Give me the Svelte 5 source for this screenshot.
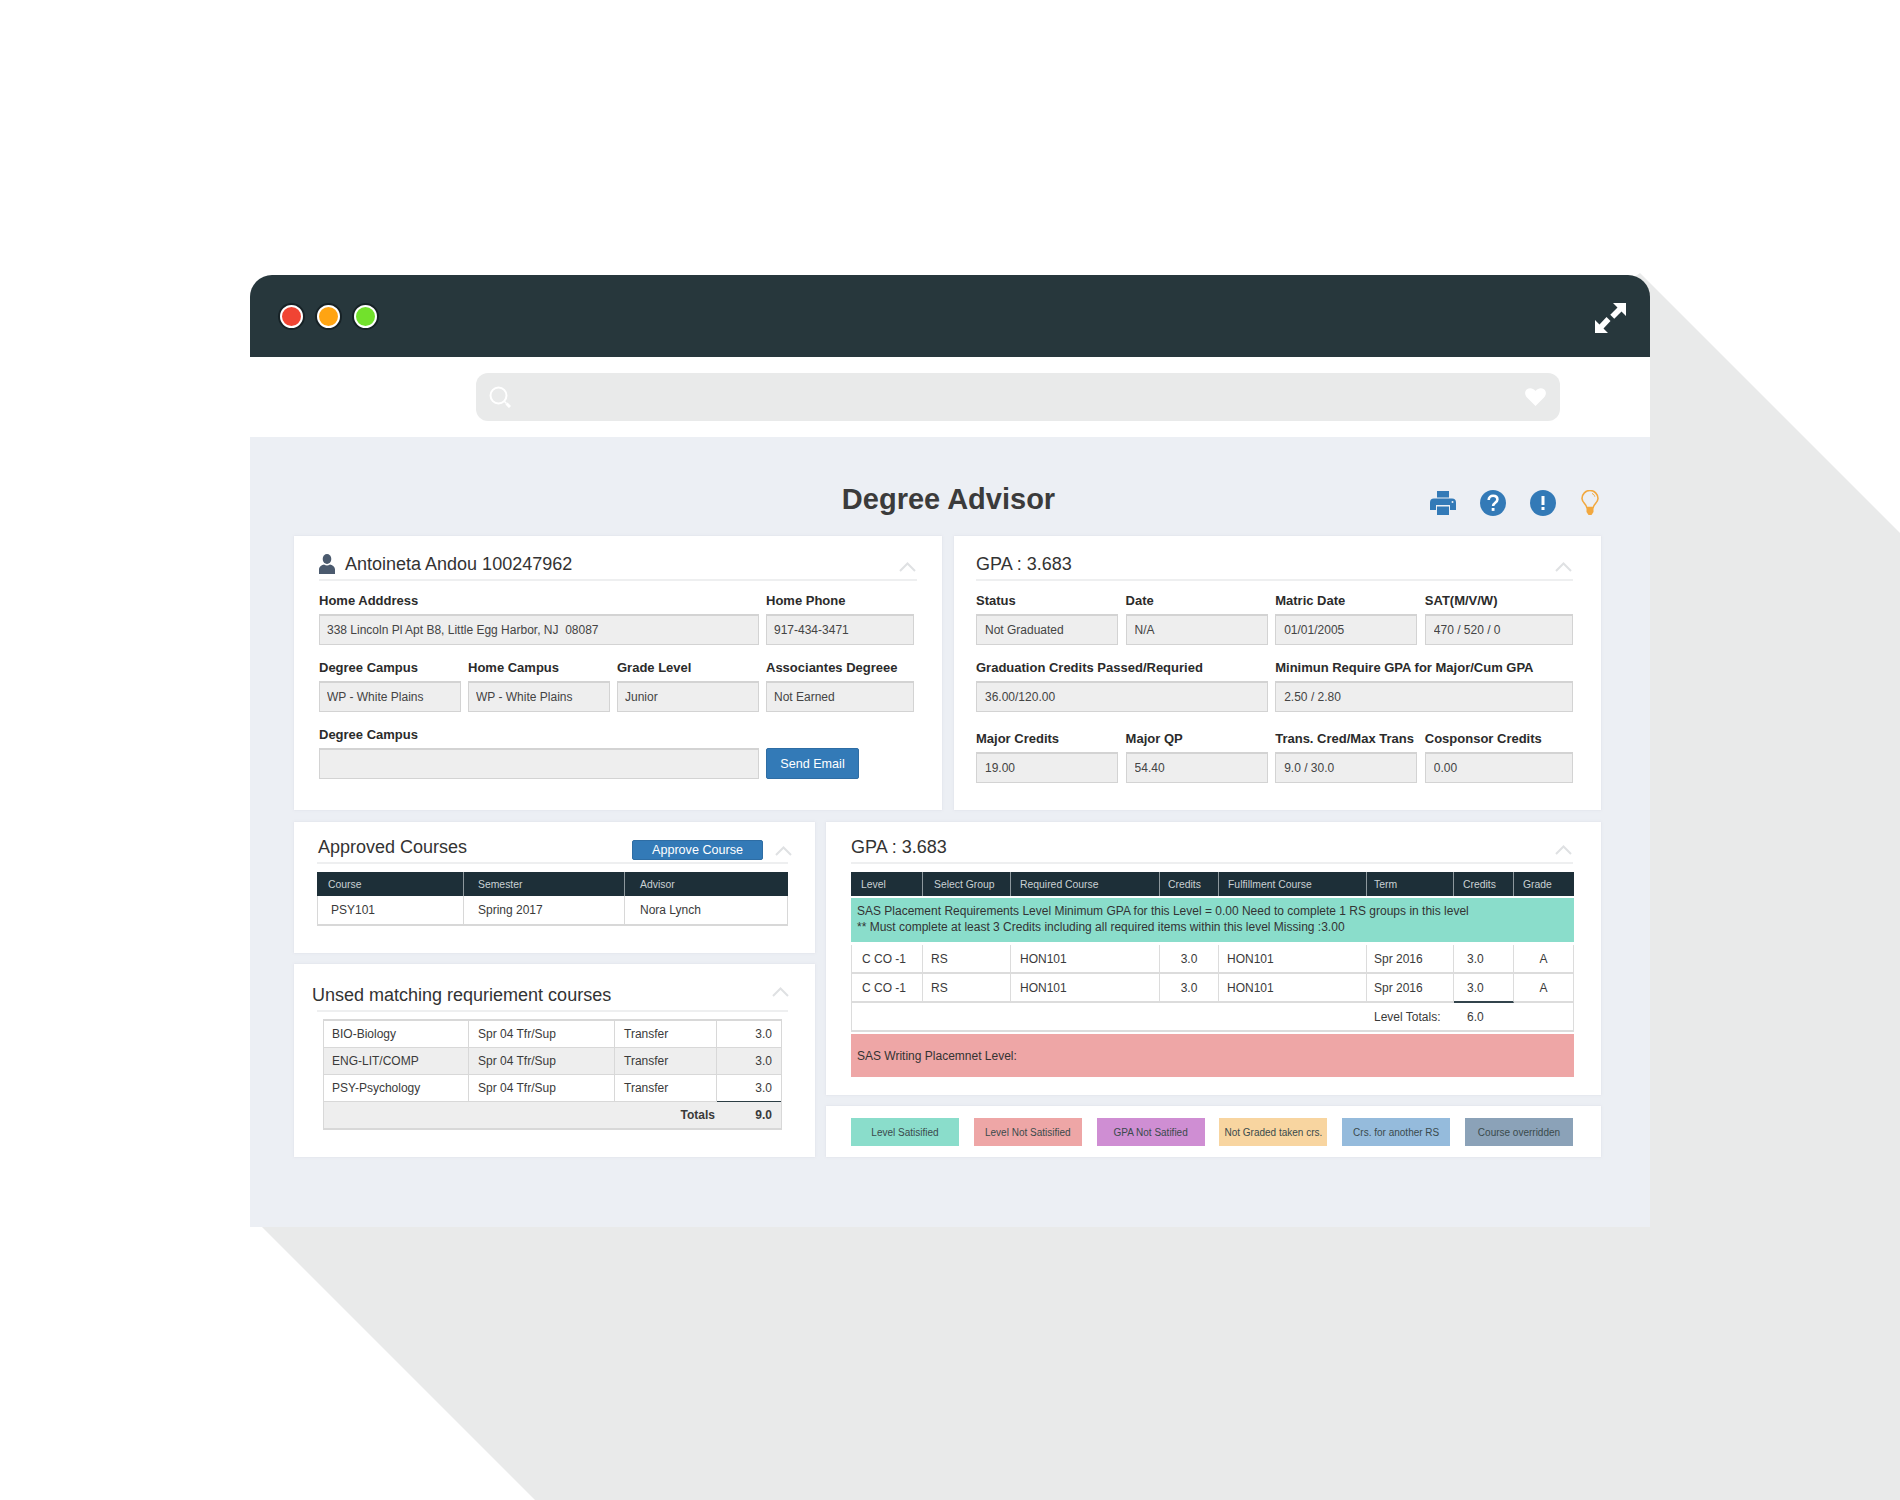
<script>
  const rowOne = [
    { label: 'Home Adddress', value: '338 Lincoln Pl Apt B8, Little Egg Harbor, NJ  08087', cls: 'span3' },
    { label: 'Home Phone', value: '917-434-3471' },
    { label: 'Degree Campus', value: 'WP - White Plains' },
    { label: 'Home Campus', value: 'WP - White Plains' },
    { label: 'Grade Level', value: 'Junior' },
    { label: 'Associantes Degreee', value: 'Not Earned' }
  ];
  const gpaFields = [
    { label: 'Status', value: 'Not Graduated' },
    { label: 'Date', value: 'N/A' },
    { label: 'Matric Date', value: '01/01/2005' },
    { label: 'SAT(M/V/W)', value: '470 / 520 / 0' },
    { label: 'Graduation Credits Passed/Requried', value: '36.00/120.00', cls: 'span2' },
    { label: 'Minimun Require GPA for Major/Cum GPA', value: '2.50 / 2.80', cls: 'span2' },
    { label: 'Major Credits', value: '19.00', cls: 'low' },
    { label: 'Major QP', value: '54.40', cls: 'low' },
    { label: 'Trans. Cred/Max Trans', value: '9.0 / 30.0', cls: 'low' },
    { label: 'Cosponsor Credits', value: '0.00', cls: 'low' }
  ];
  const unused = [
    ['BIO-Biology', 'Spr 04 Tfr/Sup', 'Transfer', '3.0'],
    ['ENG-LIT/COMP', 'Spr 04 Tfr/Sup', 'Transfer', '3.0'],
    ['PSY-Psychology', 'Spr 04 Tfr/Sup', 'Transfer', '3.0']
  ];
  const gpaHead = ['Level', 'Select Group', 'Required Course', 'Credits', 'Fulfillment Course', 'Term', 'Credits', 'Grade'];
  const legend = [
    ['Level Satisified', 'c1'],
    ['Level Not Satisified', 'c2'],
    ['GPA Not Satified', 'c3'],
    ['Not Graded taken crs.', 'c4'],
    ['Crs. for another RS', 'c5'],
    ['Course overridden', 'c6']
  ];
</script>

{#snippet chevron()}
  <svg class="chevron" width="17" height="10" viewBox="0 0 17 10"><path d="M1 9 8.500 1.500 16 9" fill="none" stroke="#dfe1e3" stroke-width="2"/></svg>
{/snippet}

<div class="page">
  <svg class="shadow" width="1900" height="1500" viewBox="0 0 1900 1500"><polygon points="1640,273 1900,533 1900,1500 535,1500 262,1227" fill="#e9eaea"/></svg>

  <div class="window">
    <header class="bar">
      <span class="dot red"></span>
      <span class="dot orange"></span>
      <span class="dot green"></span>
      <svg class="expand" width="32" height="31" viewBox="0 0 32 31">
        <path d="M18 0H31V13L26.500 8.500 19.250 15.750 15.250 11.750 22.500 4.500zM0 30V17L4.500 21.500 11.500 14 15.500 18 8.500 25.500 13 30z" fill="#fff"/>
      </svg>
    </header>

    <div class="searchstrip">
      <div class="search">
        <svg width="23" height="22" viewBox="0 0 23 22"><circle cx="9.500" cy="9.500" r="8" fill="none" stroke="#fff" stroke-width="2"/><path d="M15.500 15.500l2 2" stroke="#fff" stroke-width="1.500"/><path d="M17.500 17.500l3.500 3.500" stroke="#fff" stroke-width="3"/></svg>
        <svg width="21" height="18" viewBox="0 0 21 18"><path d="M10.500 18 2 9.500C-.5 7-.5 3 2 1.200 4.500-.6 8-.2 10.500 3 13-.2 16.500-.6 19 1.200c2.500 1.800 2.500 5.800 0 8.300z" fill="#fff"/></svg>
      </div>
    </div>

    <main class="main">
      <div class="titlerow">
        <span></span>
        <h1>Degree Advisor</h1>
        <div class="tools">
          <svg width="26" height="24" viewBox="0 0 26 24"><path d="M7 0h12v6.500H7z" fill="#337ab7"/><path d="M4 7.500h18a4 4 0 0 1 4 4V19h-6v-5H6v5H0v-7.500a4 4 0 0 1 4-4z" fill="#337ab7"/><path d="M7 15.500h12V24H7z" fill="#337ab7"/><circle cx="22.500" cy="11" r="1" fill="#eceff4"/></svg>
          <svg width="26" height="26" viewBox="0 0 26 26"><circle cx="13" cy="13" r="13" fill="#337ab7"/><path d="M8.700 10c0-2.700 2-4.300 4.400-4.300 2.500 0 4.300 1.500 4.300 3.800 0 3.300-4.300 3.300-4.300 6.500" fill="none" stroke="#fff" stroke-width="2.600"/><rect x="11.700" y="18" width="2.800" height="2.900" fill="#fff"/></svg>
          <svg width="26" height="26" viewBox="0 0 26 26"><circle cx="13" cy="13" r="13" fill="#337ab7"/><rect x="11.500" y="6" width="3" height="9" fill="#fff"/><rect x="11.500" y="17" width="3" height="3" fill="#fff"/></svg>
          <svg class="bulb" width="18" height="26" viewBox="0 0 18 26"><path d="M5.800 17.500C5.500 14 1 12.500 1 8.500a8 8 0 0 1 16 0c0 4-4.500 5.500-4.800 9z" fill="none" stroke="#f2a83f" stroke-width="1.600"/><path d="M5.500 18h7v4l-2 3h-3l-2-3z" fill="#f2a83f"/><path d="M11 3.500c1.500.6 2.500 1.700 2.800 3.200" fill="none" stroke="#f2a83f" stroke-width="1"/></svg>
        </div>
      </div>

      <div class="toprow">
        <section class="card student">
          <div class="head">
            <svg class="person" width="16" height="20" viewBox="0 0 16 20"><ellipse cx="8" cy="5" rx="4.300" ry="5" fill="#4b5a6e"/><path d="M0 20v-4.500C0 12.500 3 11 5 10.500c2 1.200 4 1.200 6 0 2 .5 5 2 5 5V20z" fill="#4b5a6e"/></svg>
            <h2>Antoineta Andou 100247962</h2>
            {@render chevron()}
          </div>
          <div class="fields">
            {#each rowOne as f}
              <div class="field {f.cls ?? ''}">
                <span class="label">{f.label}</span>
                <input readonly value={f.value} aria-label={f.label} />
              </div>
            {/each}
            <div class="field span3">
              <span class="label">Degree Campus</span>
              <input readonly value="" aria-label="Degree Campus" />
            </div>
            <button class="btn send">Send Email</button>
          </div>
        </section>

        <section class="card gpa">
          <div class="head">
            <h2>GPA : 3.683</h2>
            {@render chevron()}
          </div>
          <div class="fields">
            {#each gpaFields as f}
              <div class="field {f.cls ?? ''}">
                <span class="label">{f.label}</span>
                <input readonly value={f.value} aria-label={f.label} />
              </div>
            {/each}
          </div>
        </section>
      </div>

      <div class="bottomrow">
        <div class="stack">
          <section class="card approved">
            <div class="head">
              <h2>Approved Courses</h2>
              <button class="btn approve">Approve Course</button>
              {@render chevron()}
            </div>
            <table class="dark approvedtable">
              <thead><tr><th class="a1">Course</th><th class="a2">Semester</th><th class="a3">Advisor</th></tr></thead>
              <tbody><tr><td class="a1">PSY101</td><td class="a2">Spring 2017</td><td class="a3">Nora Lynch</td></tr></tbody>
            </table>
          </section>

          <section class="card unused">
            <div class="head">
              <h2>Unsed matching requriement courses</h2>
              {@render chevron()}
            </div>
            <table class="unusedtable">
              <tbody>
                {#each unused as r}
                  <tr>
                    <td class="u1">{r[0]}</td><td class="u2">{r[1]}</td><td class="u3">{r[2]}</td><td class="u4">{r[3]}</td>
                  </tr>
                {/each}
                <tr class="totals">
                  <td colspan="3">Totals</td><td class="u4">9.0</td>
                </tr>
              </tbody>
            </table>
          </section>
        </div>

        <div class="stack">
          <section class="card levels">
            <div class="head">
              <h2>GPA : 3.683</h2>
              {@render chevron()}
            </div>
            <table class="dark leveltable">
              <thead>
                <tr>{#each gpaHead as h, i}<th class="g{i}">{h}</th>{/each}</tr>
              </thead>
              <tbody>
                <tr><td colspan="8" class="banner ok">SAS Placement Requirements Level Minimum GPA for this Level = 0.00 Need to complete 1 RS groups in this level<br />** Must complete at least 3 Credits including all required items within this level Missing :3.00</td></tr>
                {#each [0, 1] as row}
                  <tr class="data">
                    <td class="g0">C CO -1</td><td class="g1">RS</td><td class="g2">HON101</td><td class="g3 mid">3.0</td><td class="g4">HON101</td><td class="g5">Spr 2016</td><td class="g6" class:under={row === 1}>3.0</td><td class="g7 mid">A</td>
                  </tr>
                {/each}
                <tr class="data total">
                  <td colspan="5"></td><td class="g5 nowrap">Level Totals:</td><td class="g6">6.0</td><td></td>
                </tr>
                <tr><td colspan="8" class="banner bad">SAS Writing Placemnet Level:</td></tr>
              </tbody>
            </table>
          </section>

          <section class="card legend">
            {#each legend as [name, c]}
              <span class="chip {c}">{name}</span>
            {/each}
          </section>
        </div>
      </div>
    </main>
  </div>
</div>

<style>
  :global(body) { margin: 0; background: #fff; }
  .page {
    position: relative;
    width: 1900px;
    height: 1500px;
    overflow: hidden;
    padding: 275px 0 0 250px;
    box-sizing: border-box;
    font-family: "Liberation Sans", Arial, sans-serif;
    color: #333;
  }
  .shadow { position: absolute; left: 0; top: 0; }
  .window { position: relative; width: 1400px; }

  .bar {
    display: flex;
    align-items: center;
    gap: 14px;
    height: 82px;
    padding: 0 23px 0 30px;
    box-sizing: border-box;
    background: #27373c;
    border-radius: 22px 22px 0 0;
  }
  .dot {
    width: 19px;
    height: 19px;
    border-radius: 50%;
    border: 2px solid #fff;
    box-shadow: 0 0 0 2px #172226;
  }
  .red { background: #f04433; }
  .orange { background: #ffa412; }
  .green { background: #72e12c; }
  .expand { margin: 4px 0 0 auto; }

  .searchstrip { background: #fff; height: 80px; padding: 16px 0 0 226px; box-sizing: border-box; }
  .search {
    display: flex;
    justify-content: space-between;
    align-items: center;
    width: 1084px;
    height: 48px;
    padding: 0 14px 0 13px;
    box-sizing: border-box;
    background: #e9eaea;
    border-radius: 12px;
  }

  .main {
    background: #eceff4;
    height: 790px;
    padding: 0 49px 0 44px;
    box-sizing: border-box;
  }
  .titlerow {
    display: grid;
    grid-template-columns: 1fr auto 1fr;
    align-items: start;
    height: 99px;
    padding-top: 45px;
    box-sizing: border-box;
  }
  h1 { margin: 0 0 0 2px; font-size: 29px; line-height: 34px; font-weight: 700; color: #3b3b3b; }
  .tools { display: flex; justify-content: flex-end; align-items: center; gap: 24px; margin: 8px 2px 0 0; }
  .bulb { margin-left: 1px; }

  .toprow { display: grid; grid-template-columns: 648px 1fr; column-gap: 12px; height: 274px; }
  .bottomrow { display: grid; grid-template-columns: 521px 775px; column-gap: 11px; margin-top: 12px; }
  .stack { display: flex; flex-direction: column; gap: 11px; }

  .card { background: #fff; box-sizing: border-box; box-shadow: 0 0 2px rgba(200, 205, 215, .5); }
  .head {
    display: flex;
    align-items: center;
    height: 30px;
    padding-top: 1px;
    border-bottom: 2px solid #eeeff0;
    box-sizing: content-box;
  }
  h2 { margin: 0; font-size: 18px; font-weight: 400; line-height: 30px; color: #333; white-space: nowrap; }
  .chevron { margin: auto 1px 7px auto; flex: none; }

  .student { padding: 12px 25px 0 25px; }
  .gpa { padding: 12px 28px 0 22px; }
  .person { margin-right: 10px; }
  .fields {
    display: grid;
    row-gap: 15px;
    margin-top: 12px;
  }
  .gpa .fields { grid-template-columns: 142px 142px 142px 148px; column-gap: 7.600px; }
  .gpa input { padding-left: 8px; }
  .student .fields { grid-template-columns: 142px 142px 142px 148px; column-gap: 7px; }
  .field { display: flex; flex-direction: column; min-width: 0; }
  .span3 { grid-column: span 3; }
  .span2 { grid-column: span 2; }
  .low { margin-top: 4px; }
  .label { font-size: 13px; line-height: 16px; font-weight: 700; color: #2b2b2b; margin-bottom: 5px; white-space: nowrap; }
  input {
    display: block;
    width: 100%;
    height: 31px;
    padding: 0 7px;
    box-sizing: border-box;
    background: #eee;
    border: 1px solid #d3d3d3;
    border-top-width: 2px;
    border-radius: 0;
    font: 12px "Liberation Sans", Arial, sans-serif;
    color: #444;
    outline: none;
  }

  .btn {
    background: #337ab7;
    color: #fff;
    border: 1px solid #2e6da4;
    border-radius: 2px;
    padding: 0;
    font: 12.600px "Liberation Sans", Arial, sans-serif;
  }
  .send { width: 93px; height: 31px; align-self: end; }
  .approve { width: 131px; height: 20px; margin: 5px 0 0 auto; }
  .approve + .chevron { margin: auto -4px 6px 12px; }

  table { border-collapse: separate; border-spacing: 0; table-layout: fixed; font-size: 12px; color: #3a3a3a; }
  .dark th {
    height: 24px;
    padding: 0 0 0 10px;
    box-sizing: border-box;
    background: #1d2f38;
    color: #c9d1d4;
    font-size: 10.400px;
    font-weight: 400;
    text-align: left;
    border-right: 1px solid #8d989d;
    white-space: nowrap;
    overflow: hidden;
  }
  .dark th:last-child { border-right: 0; }

  .approved { padding: 9px 27px 27px 23px; }
  .approved h2 { margin-left: 1px; }
  .approvedtable { width: 471px; margin-top: 8px; }
  .a1 { width: 147px; }
  .a2 { width: 161px; }
  .a3 { width: 163px; }
  .approvedtable th.a1 { padding-left: 11px; }
  .approvedtable th.a2 { padding-left: 14px; }
  .approvedtable th.a3 { padding-left: 15px; }
  .approvedtable td {
    height: 30px;
    box-sizing: border-box;
    padding: 0 0 0 14px;
    border-right: 1px solid #d8d8d8;
    border-bottom: 2px solid #d8d8d8;
  }
  .approvedtable td.a1 { padding-left: 13px; }
  .approvedtable td.a3 { padding-left: 15px; }
  .approvedtable td:first-child { border-left: 1px solid #d8d8d8; }

  .unused { padding: 15px 27px 27px 23px; }
  .unused h2 { margin-left: -5px; }
  .unused .chevron { margin: auto -1px 13px auto; }
  .unusedtable {
    width: 457px;
    margin: 7px 0 0 6px;
    border-top: 2px solid #d8d8d8;
    border-left: 1px solid #d8d8d8;
    border-right: 1px solid #d8d8d8;
    border-bottom: 2px solid #d8d8d8;
  }
  .unusedtable td {
    height: 27px;
    box-sizing: border-box;
    padding: 0 0 0 8px;
    border-bottom: 1px solid #d8d8d8;
    border-right: 1px solid #d8d8d8;
    white-space: nowrap;
  }
  .unusedtable tr:nth-child(2) td { background: #eee; }
  .unusedtable tr.totals td { height: 26px; }
  .u1 { width: 145px; }
  .unusedtable td.u2 { width: 146px; padding-left: 9px; }
  .unusedtable td.u3 { width: 102px; padding-left: 9px; }
  .unusedtable td.u4 { width: 64px; padding: 0 9px 0 0; text-align: right; border-right: 0; }
  .unusedtable tr:nth-child(3) td.u4 { border-bottom: 1px solid #2c3e45; }
  .totals td { background: #eee; font-weight: 700; border-bottom: 0 !important; border-right: 0 !important; }
  .totals td:first-child { text-align: right; padding: 0 2px 0 0; }

  .levels { padding: 9px 28px 18px 25px; }
  .leveltable { width: 723px; margin-top: 8px; }
  .g0 { width: 72px; }
  .g1 { width: 88px; }
  .g2 { width: 149px; }
  .g3 { width: 59px; }
  .g4 { width: 148px; }
  .g5 { width: 87px; }
  .g6 { width: 60px; }
  .g7 { width: 60px; }
  .leveltable th.g1 { padding-left: 11px; }
  .leveltable th.g2, .leveltable th.g6 { padding-left: 9px; }
  .leveltable th.g5 { padding-left: 7px; }
  .leveltable th.g3 { padding-left: 8px; }
  .leveltable th.g4, .leveltable th.g7 { padding-left: 9px; }
  .banner {
    padding: 0 0 0 6px;
    color: #333;
    line-height: 16px;
    border-top: 2px solid #fff;
  }
  .ok { height: 49px; padding-bottom: 2px; background: #8addcb; border-bottom: 3px solid #fff; box-sizing: border-box; }
  .bad { height: 45px; background: #eea6a6; box-sizing: border-box; }
  .data td {
    height: 29px;
    box-sizing: border-box;
    padding: 0 0 0 10px;
    border-right: 1px solid #dcdcdc;
    border-bottom: 2px solid #dcdcdc;
    white-space: nowrap;
  }
  .data td:first-child { border-left: 1px solid #dcdcdc; }
  .data td.g1 { padding-left: 8px; }
  .data td.g2 { padding-left: 9px; }
  .data td.g4 { padding-left: 8px; }
  .data td.g5 { padding-left: 7px; }
  .data td.g6 { padding-left: 13px; }
  .data td.mid { text-align: center; padding-left: 0; }
  .data td.under { border-bottom-color: #33444c; }
  .total td { border-right: 0; }
  .total td:last-child { border-right: 1px solid #dcdcdc; }

  .legend {
    display: flex;
    justify-content: space-between;
    padding: 12px 28px 11px 25px;
  }
  .chip {
    display: flex;
    align-items: center;
    justify-content: center;
    width: 108px;
    height: 28px;
    font-size: 10px;
    color: #3a4a4c;
    white-space: nowrap;
  }
  .c1 { background: #8addcb; }
  .c2 { background: #eea6a6; }
  .c3 { background: #cf8ed3; }
  .c4 { background: #f8d5a0; }
  .c5 { background: #95bbdc; }
  .c6 { background: #8ba2b8; }
</style>
